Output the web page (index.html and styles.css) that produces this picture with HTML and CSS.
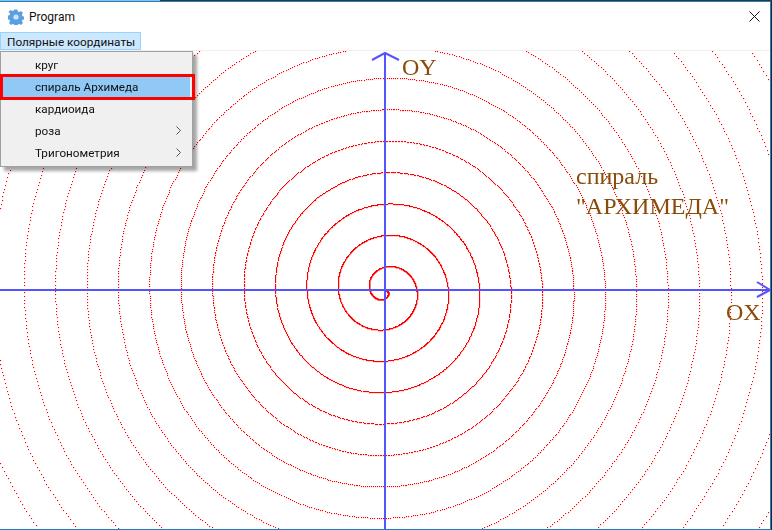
FILE: index.html
```html
<!DOCTYPE html>
<html lang="ru">
<head>
<meta charset="utf-8">
<title>Program</title>
<link rel="stylesheet" href="styles.css">
</head>
<body>
<div class="desktop-strip"></div>
<div class="window">
  <header class="titlebar">
    <svg class="app-icon" viewBox="0 0 16 16" width="16" height="16" aria-hidden="true">
      <path fill="#5a9fe2" d="M6.6 0.5h2.8l.4 2 1.5.6 1.7-1.1 2 2-1.1 1.7.6 1.5 2 .4v2.8l-2 .4-.6 1.5 1.1 1.7-2 2-1.7-1.1-1.5.6-.4 2H6.6l-.4-2-1.5-.6-1.7 1.1-2-2 1.1-1.7-.6-1.5-2-.4V6.6l2-.4.6-1.5L.5 3 2.5 1l1.7 1.1 1.5-.6z"/>
      <circle cx="8" cy="8" r="2.6" fill="#cfe4f8"/>
    </svg>
    <span class="title">Program</span>
    <svg class="close" viewBox="0 0 11 11" width="11" height="11" aria-hidden="true">
      <path d="M.5.5l10 10M10.5.5l-10 10" stroke="#111" stroke-width="1" fill="none"/>
    </svg>
  </header>
  <nav class="menubar">
    <span class="menu-top">Полярные координаты</span>
  </nav>
  <div class="menubar-line"></div>
  <main class="plot">
    <canvas id="graph" class="graph" width="770" height="478"></canvas>
    <span class="label label-oy">OY</span>
    <span class="label label-ox">OX</span>
    <span class="label label-caption">спираль<br>"АРХИМЕДА"</span>
    <ul class="dropdown">
      <li class="item">круг</li>
      <li class="item item-active">спираль Архимеда</li>
      <li class="item">кардиоида</li>
      <li class="item">роза<svg class="chev" viewBox="0 0 5 9" width="5" height="9" aria-hidden="true"><path d="M.5.5l4 4-4 4" stroke="#555" fill="none"/></svg></li>
      <li class="item">Тригонометрия<svg class="chev" viewBox="0 0 5 9" width="5" height="9" aria-hidden="true"><path d="M.5.5l4 4-4 4" stroke="#555" fill="none"/></svg></li>
    </ul>
  </main>
</div>
<script src="script.js"></script>
</body>
</html>
```

FILE: styles.css
```css
* { box-sizing: border-box; }
html, body { margin: 0; padding: 0; }
body {
  width: 772px;
  height: 530px;
  overflow: hidden;
  background: #1b2a28;
  font-family: Roboto, "Open Sans", sans-serif;
  display: flex;
  flex-direction: column;
}
.desktop-strip {
  height: 1px;
  flex: none;
  background: linear-gradient(to right, #8fc0e4 0, #8fc0e4 160px, #2b3a30 160px);
}
.window {
  flex: 1;
  width: 771px;
  display: flex;
  flex-direction: column;
  background: #fff;
  border-top: 1px solid #1f7fc4;
  border-right: 1px solid #1f7fc4;
  border-bottom: 1px solid #1f7fc4;
  min-height: 0;
}
.titlebar {
  height: 30px;
  flex: none;
  display: flex;
  align-items: center;
  padding: 0 10px 0 8px;
  background: #fff;
}
.app-icon { flex: none; margin-right: 5px; }
.title { font-size: 12px; color: #111; flex: 1; }
.close { flex: none; margin-bottom: 2px; }
.menubar { height: 18px; flex: none; display: flex; background: #fff; }
.menu-top {
  width: 141px;
  height: 18px;
  line-height: 18px;
  padding: 0 0 0 6px;
  font-size: 11.8px;
  color: #111;
  white-space: nowrap;
  background: #cce8ff;
  border: 1px solid #99d1ff;
}
.menubar-line { height: 1px; background: #f0f0f0; flex: none; }
.plot { position: relative; flex: 1; min-height: 0; overflow: hidden; background: #fff; }
.graph { display: block; }
.label {
  position: absolute;
  font-family: "Liberation Serif", serif;
  font-size: 24px;
  line-height: 27px;
  color: #8a4b08;
  white-space: nowrap;
}
.label-oy { left: 402px; top: 3px; }
.label-ox { left: 726px; top: 248px; }
.label-caption { left: 576px; top: 110px; line-height: 30px; }
.dropdown {
  position: absolute;
  left: 0;
  top: 0;
  width: 193px;
  height: 116px;
  margin: 0;
  padding: 2px;
  list-style: none;
  background: #f0f0f0;
  border: 1px solid #a0a0a0;
  box-shadow: 4px 4px 3px rgba(0,0,0,.35);
}
.item {
  position: relative;
  height: 22px;
  line-height: 23px;
  padding-left: 32px;
  font-size: 11.7px;
  color: #111;
}
.item-active { background: #90c8f6; }
.item-active::after {
  content: "";
  position: absolute;
  left: -3px;
  right: -5px;
  top: -2px;
  bottom: -2px;
  border: 3px solid #f00;
}
.chev { position: absolute; right: 9px; top: 6px; }
```

FILE: script.js
```js
var canvas = document.getElementById('graph');
var ctx = canvas.getContext('2d');
var cx = 385, cy = 239;

function hline(x0, x1, y) { ctx.fillRect(x0, y - 1, x1 - x0, 2); }
function vline(x, y0, y1) { ctx.fillRect(x - 1, y0, 2, y1 - y0); }

ctx.fillStyle = '#f00';
for (var t = 0; t < 120; t += 0.01) {
  var r = 5 * t;
  var x = Math.round(cx + r * Math.cos(t));
  var y = Math.round(cy + r * Math.sin(t));
  if (x >= 0 && x < 770 && y >= 0 && y < 478) ctx.fillRect(x, y, 1.12, 1.12);
}

ctx.fillStyle = '#5555ff';
hline(0, 770, cy);
vline(cx, 2, 478);

ctx.strokeStyle = '#5555ff';
ctx.lineWidth = 2;
ctx.beginPath();
ctx.moveTo(372, 9); ctx.lineTo(385, 2); ctx.lineTo(399, 9);
ctx.moveTo(757, 231); ctx.lineTo(770, 239); ctx.lineTo(757, 246);
ctx.stroke();
```
